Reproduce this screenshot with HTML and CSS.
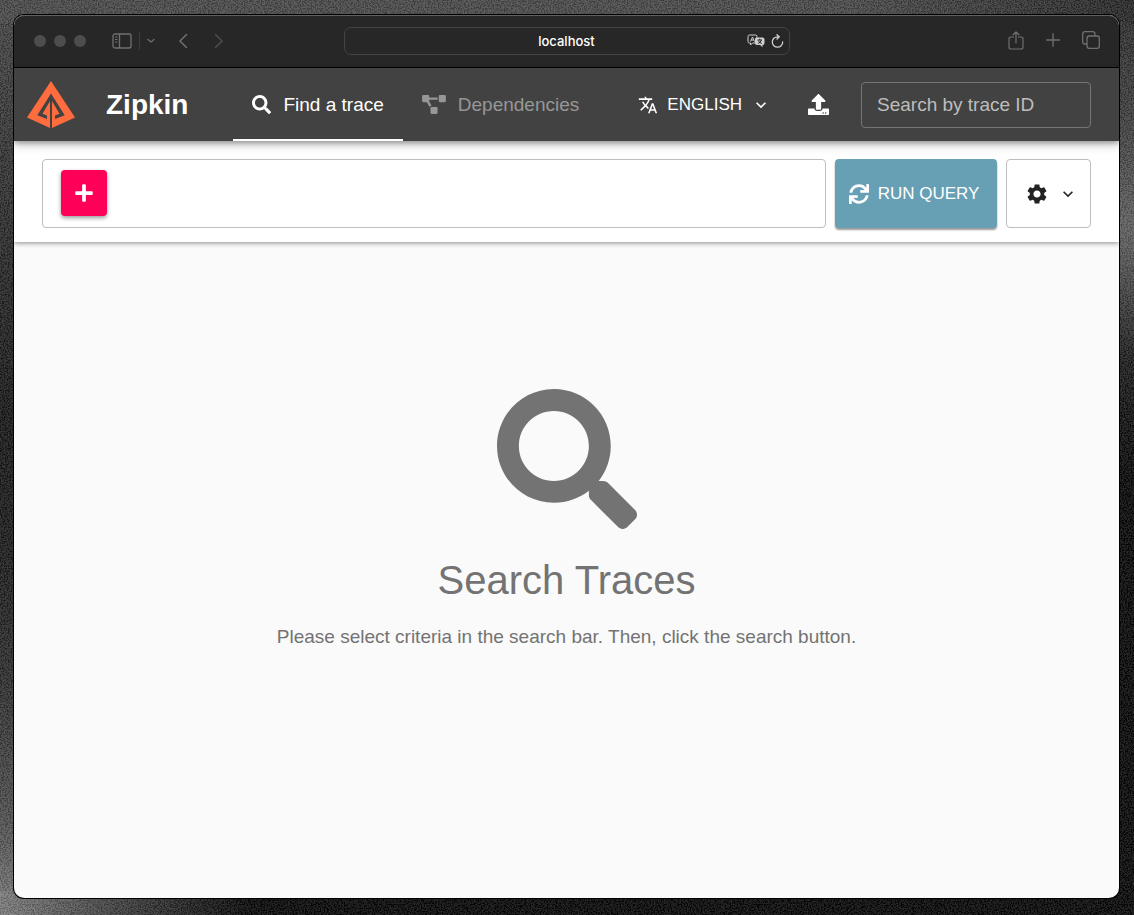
FILE: index.html
```
<!DOCTYPE html>
<html lang="en">
<head>
    <meta charset="utf-8">
    <title>Zipkin</title>
    <link rel="stylesheet" href="styles.css">
</head>
<body>
    <svg class="grain" aria-hidden="true">
        <filter id="noise" x="0" y="0" width="100%" height="100%">
            <feTurbulence type="fractalNoise" baseFrequency="0.7" numOctaves="2" seed="4"/>
            <feColorMatrix type="matrix" values="3 0 0 0 -1.2  3 0 0 0 -1.2  3 0 0 0 -1.2  0 0 0 0 0.14"/>
        </filter>
        <rect width="100%" height="100%" filter="url(#noise)"/>
    </svg>

    <div class="window">
        <div class="toolbar">
            <div class="toolbar-side">
                <span class="dots"><i></i><i></i><i></i></span>
                <button class="tool sidebar-btn" aria-label="Sidebar">
                    <svg width="20" height="16" viewBox="0 0 20 16" fill="none" stroke="currentColor"><rect x="1" y="1" width="18" height="14" rx="2" stroke-width="1.3"/><path d="M7.5 1v14" stroke-width="1.3"/><path d="M3 4h2.5M3 6.5h2.5M3 9h2.5"/></svg>
                </button>
                <span class="divider"></span>
                <button class="tool groups-btn" aria-label="Tab groups">
                    <svg width="8" height="6" viewBox="0 0 8 6" fill="none" stroke="currentColor" stroke-width="1.3" stroke-linecap="round"><path d="M1 1.5l3 2.5 3-2.5"/></svg>
                </button>
                <button class="tool" aria-label="Back">
                    <svg width="10" height="16" viewBox="0 0 10 16" fill="none" stroke="currentColor" stroke-width="1.5" stroke-linecap="round"><path d="M8.500 1.500L2 8l6.500 6.500"/></svg>
                </button>
                <button class="tool forward-btn" aria-label="Forward">
                    <svg width="10" height="16" viewBox="0 0 10 16" fill="none" stroke="currentColor" stroke-width="1.5" stroke-linecap="round"><path d="M1.500 1.500L8 8l-6.500 6.500"/></svg>
                </button>
            </div>
            <div class="address">
                <span class="host">localhost</span>
                <button class="tool light" aria-label="Translate page">
                    <svg width="18" height="14" viewBox="0 0 18 14"><path d="M2.500 1h6q1.500 0 1.500 1.500v5Q10 9 8.500 9H5.500l-2 2V9h-1Q1 9 1 7.500v-5Q1 1 2.500 1z" fill="none" stroke="currentColor" stroke-width="1"/><path d="M3.500 7.500L5.500 3l2 4.500M4.200 6h2.600" fill="none" stroke="currentColor" stroke-width="1"/><path d="M9.500 3.500h6q2 0 2 2V9q0 2-2 2v2.300L13.200 11H10q-2 0-2-2V5.500q0-2 1.500-2z" fill="currentColor"/><path d="M10.500 6h4.500M12.700 4.800V6M11 9.500q3-1 3.300-3.500M11.300 6.500q1 2.300 3.500 3" fill="none" stroke="#272727" stroke-width="1"/></svg>
                </button>
                <button class="tool light" aria-label="Reload">
                    <svg width="13" height="15" viewBox="0 0 13 15" fill="none" stroke="currentColor" stroke-width="1.3" stroke-linecap="round"><path d="M11.700 8a5.200 5.200 0 1 1-5.200-5.200H8M6 .800l2.200 2L6 5"/></svg>
                </button>
            </div>
            <div class="toolbar-side right">
                <button class="tool" aria-label="Share">
                    <svg width="16" height="20" viewBox="0 0 16 20" fill="none" stroke="currentColor" stroke-width="1.2" stroke-linecap="round" stroke-linejoin="round"><path d="M5.500 6H3Q1 6 1 8v8q0 2 2 2h10q2 0 2-2V8q0-2-2-2h-2.500M8 12V1M5 3.800L8 1l3 2.800"/></svg>
                </button>
                <button class="tool" aria-label="New tab">
                    <svg width="14" height="16" viewBox="0 0 14 16" stroke="currentColor" stroke-width="1.3" stroke-linecap="round"><path d="M7 .700v12.600M.700 7h12.600"/></svg>
                </button>
                <button class="tool" aria-label="Tab overview">
                    <svg width="18" height="20" viewBox="0 0 18 20" fill="none" stroke="currentColor" stroke-width="1.3"><rect x="5" y="5" width="12.300" height="12.300" rx="2.200"/><path d="M5 13H3q-2.300 0-2.300-2.300V3Q.700.700 3 .700h7.700Q13 .700 13 3v2"/></svg>
                </button>
            </div>
        </div>

        <header class="header">
            <svg class="logo" viewBox="0 0 48 47" fill="#ff6c3d"><path d="M24 0L0 36.500 23 47V20l-7.500 12.800 4.500 1.700V38l-9.700-3.700L24 12.500l13.700 21.800L28 38v-3.500l4.500-1.700L25 20v27l23-10.500z"/></svg>
            <h1 class="brand">Zipkin</h1>
            <nav class="tabs">
                <a class="tab active" href="#">
                    <svg width="19" height="19" viewBox="0 0 512 512" fill="currentColor"><path d="M505 442.700L405.300 343c-4.500-4.500-10.600-7-17-7H372c27.600-35.300 44-79.700 44-128C416 93.100 322.900 0 208 0S0 93.100 0 208s93.100 208 208 208c48.300 0 92.700-16.400 128-44v16.300c0 6.400 2.500 12.500 7 17l99.700 99.700c9.400 9.400 24.600 9.400 33.900 0l28.300-28.300c9.400-9.400 9.400-24.600.1-34zM208 336c-70.700 0-128-57.200-128-128 0-70.700 57.200-128 128-128 70.700 0 128 57.200 128 128 0 70.700-57.200 128-128 128z"/></svg>
                    Find a trace
                </a>
                <a class="tab" href="#">
                    <svg width="24" height="19" viewBox="0 0 640 512" fill="currentColor"><path d="M384 320H256c-17.670 0-32 14.330-32 32v128c0 17.670 14.330 32 32 32h128c17.670 0 32-14.330 32-32V352c0-17.670-14.330-32-32-32zM192 32c0-17.670-14.330-32-32-32H32C14.330 0 0 14.330 0 32v128c0 17.670 14.330 32 32 32h95.720l73.160 128.040C211.980 300.980 232.400 288 256 288h.28L192 175.510V128h224V64H192V32zM608 0H480c-17.670 0-32 14.330-32 32v128c0 17.670 14.330 32 32 32h128c17.670 0 32-14.330 32-32V32c0-17.670-14.330-32-32-32z"/></svg>
                    Dependencies
                </a>
            </nav>
            <button class="language">
                <svg width="20" height="20" viewBox="0 0 24 24" fill="currentColor"><path d="M12.870 15.070l-2.540-2.510.03-.03c1.740-1.940 2.980-4.170 3.710-6.530H17V4h-7V2H8v2H1v1.990h11.170C11.500 7.920 10.440 9.750 9 11.350 8.070 10.320 7.300 9.190 6.690 8h-2c.73 1.630 1.730 3.170 2.980 4.560l-5.090 5.020L4 19l5-5 3.110 3.110.76-2.040zM18.500 10h-2L12 22h2l1.120-3h4.750L21 22h2l-4.500-12zm-2.620 7l1.620-4.330L19.120 17h-3.240z"/></svg>
                <span>ENGLISH</span>
                <svg width="20" height="20" viewBox="0 0 24 24" fill="currentColor"><path d="M16.590 8.590L12 13.170 7.410 8.590 6 10l6 6 6-6z"/></svg>
            </button>
            <button class="upload" aria-label="Upload JSON">
                <svg width="21" height="21" viewBox="0 0 512 512" fill="currentColor"><path d="M296 384h-80c-13.300 0-24-10.700-24-24V192h-87.700c-17.800 0-26.700-21.500-14.100-34.100L242.300 5.700c7.500-7.500 19.800-7.500 27.300 0l152.200 152.200c12.600 12.600 3.700 34.100-14.100 34.100H320v168c0 13.300-10.700 24-24 24zm216-8v112c0 13.300-10.700 24-24 24H24c-13.300 0-24-10.700-24-24V376c0-13.300 10.700-24 24-24h136v8c0 30.900 25.100 56 56 56h80c30.900 0 56-25.100 56-56v-8h136c13.300 0 24 10.700 24 24zm-124 88c0-11-9-20-20-20s-20 9-20 20 9 20 20 20 20-9 20-20zm64 0c0-11-9-20-20-20s-20 9-20 20 9 20 20 20 20-9 20-20z"/></svg>
            </button>
            <input class="trace-id" type="text" placeholder="Search by trace ID" aria-label="Search by trace ID">
        </header>

        <div class="search-bar">
            <div class="criteria">
                <button class="add" aria-label="Add criterion">
                    <svg width="18" height="20" viewBox="0 0 448 512" fill="currentColor"><path d="M416 208H272V64c0-17.670-14.330-32-32-32h-32c-17.670 0-32 14.330-32 32v144H32c-17.670 0-32 14.330-32 32v32c0 17.670 14.330 32 32 32h144v144c0 17.670 14.330 32 32 32h32c17.670 0 32-14.330 32-32V304h144c17.670 0 32-14.330 32-32v-32c0-17.670-14.330-32-32-32z"/></svg>
                </button>
            </div>
            <button class="run">
                <svg width="20" height="20" viewBox="0 0 512 512" fill="currentColor"><path d="M440.650 12.570l4 82.770A247.160 247.160 0 0 0 255.830 8C134.730 8 33.910 94.920 12.290 209.820A12 12 0 0 0 24.090 224h49.050a12 12 0 0 0 11.670-9.260 175.910 175.910 0 0 1 317-56.940l-101.460-4.860a12 12 0 0 0-12.570 12v47.410a12 12 0 0 0 12 12H500a12 12 0 0 0 12-12V12a12 12 0 0 0-12-12h-47.370a12 12 0 0 0-11.980 12.570zM255.830 432a175.610 175.610 0 0 1-146-77.800l101.800 4.870a12 12 0 0 0 12.570-12v-47.400a12 12 0 0 0-12-12H12a12 12 0 0 0-12 12V500a12 12 0 0 0 12 12h47.350a12 12 0 0 0 12-12.600l-4.150-82.570A247.170 247.170 0 0 0 255.830 504c121.110 0 221.930-86.920 243.550-201.820a12 12 0 0 0-11.800-14.180h-49.050a12 12 0 0 0-11.670 9.260A175.860 175.860 0 0 1 255.830 432z"/></svg>
                Run query
            </button>
            <button class="settings" aria-label="Settings">
                <svg width="24" height="24" viewBox="0 0 24 24" fill="currentColor"><path d="M19.140 12.940c.04-.3.06-.61.06-.94 0-.32-.02-.64-.07-.94l2.030-1.580c.18-.14.23-.41.12-.61l-1.920-3.320c-.12-.22-.37-.29-.59-.22l-2.390.96c-.5-.38-1.030-.7-1.620-.94L14.400 2.810c-.04-.24-.24-.41-.48-.41h-3.840c-.24 0-.43.17-.47.41L9.250 5.350C8.660 5.590 8.120 5.920 7.630 6.290L5.240 5.330c-.22-.08-.47 0-.59.22L2.740 8.870C2.620 9.080 2.660 9.340 2.860 9.480l2.030 1.580C4.840 11.360 4.800 11.690 4.800 12s.02.64.07.94l-2.030 1.580c-.18.14-.23.41-.12.61l1.920 3.320c.12.22.37.29.59.22l2.390-.96c.5.38 1.030.7 1.620.94l.36 2.540c.05.24.24.41.48.41h3.840c.24 0 .44-.17.47-.41l.36-2.540c.59-.24 1.130-.56 1.620-.94l2.390.96c.22.08.47 0 .59-.22l1.920-3.320c.12-.22.07-.47-.12-.61zM12 15.600c-1.980 0-3.600-1.620-3.600-3.600s1.620-3.600 3.600-3.600 3.600 1.620 3.600 3.600-1.620 3.600-3.600 3.600z"/></svg>
                <svg width="20" height="20" viewBox="0 0 24 24" fill="currentColor"><path d="M16.590 8.590L12 13.170 7.410 8.590 6 10l6 6 6-6z"/></svg>
            </button>
        </div>

        <main class="empty">
            <svg width="140" height="140" viewBox="0 0 512 512" fill="currentColor"><path d="M505 442.700L405.300 343c-4.500-4.500-10.600-7-17-7H372c27.600-35.300 44-79.700 44-128C416 93.100 322.900 0 208 0S0 93.100 0 208s93.100 208 208 208c48.300 0 92.700-16.400 128-44v16.300c0 6.400 2.500 12.500 7 17l99.700 99.700c9.400 9.400 24.600 9.400 33.900 0l28.300-28.300c9.400-9.400 9.400-24.600.1-34zM208 336c-70.700 0-128-57.200-128-128 0-70.700 57.200-128 128-128 70.700 0 128 57.200 128 128 0 70.700-57.200 128-128 128z"/></svg>
            <h2>Search Traces</h2>
            <p>Please select criteria in the search bar. Then, click the search button.</p>
        </main>
    </div>
</body>
</html>
```
FILE: styles.css
```
* {
  box-sizing: border-box;
}

body {
  margin: 0;
  min-height: 100vh;
  display: flex;
  padding: 15px 15px 17px 14px;
  font-family: "Liberation Sans", Arial, sans-serif;
  font-size: 19px;
  background:
    linear-gradient(90deg, #484848, #484848 75%, #262626) top / 100% 22px no-repeat,
    linear-gradient(90deg, #7c7c7c, #404040 10%, #060606 22%, #060606) bottom / 100% 24px no-repeat,
    linear-gradient(#2a2a2a, #404040 14%, #606060 25%, #4c4c4c 30%, #1c1c1c 39%, #060606 52%, #060606) right / 24px 100% no-repeat,
    linear-gradient(#454545, #303030 20%, #161616 45%, #1c1c1c 62%, #303030 76%, #505050 90%, #7c7c7c) left / 24px 100% no-repeat,
    #111;
}

button {
  padding: 0;
  border: none;
  background: none;
  color: inherit;
  font-family: inherit;
  font-size: 17px;
  cursor: pointer;
}

svg {
  display: block;
  flex-shrink: 0;
}

.grain {
  position: absolute;
  top: 0;
  left: 0;
  width: 100%;
  height: 100%;
  z-index: -1;
}

.window {
  flex: 1;
  display: flex;
  flex-direction: column;
  overflow: hidden;
  border-radius: 10px;
  background-color: #fafafa;
  box-shadow: 0 0 0 1px #000;
}

/* browser toolbar */
.toolbar {
  display: grid;
  grid-template-columns: 1fr 446px 1fr;
  align-items: center;
  height: 53px;
  background-color: #272727;
  border-bottom: 1px solid #000;
  box-shadow: inset 0 1px #606060;
  border-radius: 10px 10px 0 0;
}

.toolbar-side {
  display: flex;
  align-items: center;
  padding-left: 20px;
}

.toolbar-side.right {
  justify-content: flex-end;
  gap: 22px;
  padding-right: 19px;
}

.dots {
  display: flex;
  gap: 8px;
}

.dots i {
  width: 12px;
  height: 12px;
  border-radius: 50%;
  background-color: #4d4d4d;
}

.tool {
  color: #707070;
}

.tool.light {
  color: #d0d0d0;
}

.sidebar-btn {
  margin-left: 26px;
}

.divider {
  width: 1px;
  height: 18px;
  margin: 0 7px;
  background-color: #3c3c3c;
}

.groups-btn {
  margin-right: 23px;
}

.forward-btn {
  margin-left: 26px;
  color: #4d4d4d;
}

.address {
  display: flex;
  align-items: center;
  gap: 6px;
  height: 28px;
  padding: 0 5px;
  border: 1px solid #444;
  border-radius: 7px;
}

.host {
  flex: 1;
  padding-left: 43px;
  text-align: center;
  color: #fff;
  font-family: Inter, sans-serif;
  font-size: 13px;
  font-weight: 500;
}

/* app header */
.header {
  position: relative;
  z-index: 2;
  display: flex;
  align-items: center;
  height: 73px;
  padding: 0 28px 0 13px;
  background-color: #424242;
  color: #fff;
  box-shadow: 0 2px 5px rgba(0, 0, 0, 0.3), 0 4px 10px rgba(0, 0, 0, 0.2);
}

.logo {
  width: 48px;
  height: 47px;
}

.brand {
  margin: 0 45px 0 31px;
  font-size: 28px;
}

.tabs {
  display: flex;
  align-self: stretch;
}

.tab {
  display: flex;
  align-items: center;
  gap: 12px;
  padding: 0 19px;
  color: #979797;
  text-decoration: none;
  white-space: nowrap;
}

.tab.active {
  color: #fff;
  box-shadow: inset 0 -2px #fff;
}

.language {
  display: flex;
  align-items: center;
  gap: 9px;
  margin-left: auto;
}

.upload {
  margin: 0 32px 0 37px;
}

.trace-id {
  width: 230px;
  height: 46px;
  padding: 0 15px;
  border: 1px solid #757575;
  border-radius: 4px;
  background: none;
  color: #fff;
  font-family: inherit;
  font-size: 19px;
}

.trace-id::placeholder {
  color: #bdbdbd;
}

/* search bar */
.search-bar {
  position: relative;
  z-index: 1;
  display: flex;
  gap: 9px;
  padding: 18px 28px 14px;
  background-color: #fff;
  box-shadow: 0 1px 5px rgba(0, 0, 0, 0.45);
}

.criteria {
  flex: 1;
  display: flex;
  align-items: flex-start;
  height: 69px;
  padding: 10px 18px;
  border: 1px solid #bdbdbd;
  border-radius: 4px;
}

.add {
  display: flex;
  align-items: center;
  justify-content: center;
  width: 46px;
  height: 46px;
  border-radius: 4px;
  background-color: #ff0059;
  color: #fff;
  box-shadow: 0 2px 4px rgba(0, 0, 0, 0.4);
}

.run {
  display: flex;
  align-items: center;
  justify-content: center;
  gap: 9px;
  width: 162px;
  padding-right: 4px;
  border-radius: 4px;
  background-color: #67a0b5;
  color: #fff;
  text-transform: uppercase;
  box-shadow: 0 2px 2px rgba(0, 0, 0, 0.4);
}

.settings {
  display: flex;
  align-items: center;
  justify-content: center;
  gap: 9px;
  width: 85px;
  padding-left: 6px;
  border: 1px solid #bdbdbd;
  border-radius: 4px;
  color: #222;
}

/* empty state */
.empty {
  flex: 1;
  display: flex;
  flex-direction: column;
  align-items: center;
  padding: 147px 20px 40px;
  color: #737373;
  text-align: center;
}

.empty h2 {
  margin: 28px 0 24px;
  font-size: 40px;
  font-weight: normal;
  line-height: 46px;
}

.empty p {
  margin: 0;
  line-height: 20px;
}
```
